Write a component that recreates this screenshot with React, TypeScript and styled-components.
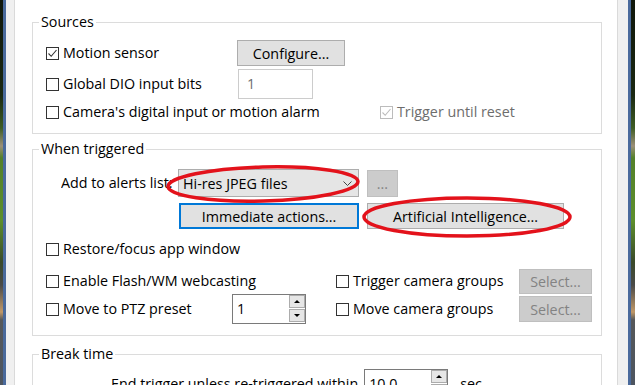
import styled, { createGlobalStyle } from 'styled-components'

const GlobalStyle = createGlobalStyle`
  html, body {
    margin: 0;
    padding: 0;
  }
  body {
    width: 635px;
    height: 385px;
    overflow: hidden;
    background: #fff;
    font-family: "Open Sans", "Noto Sans", sans-serif;
    font-size: 14.3px;
    color: #000;
  }
`

const Screen = styled.div`
  display: flex;
  width: 635px;
  height: 385px;
  overflow: hidden;
`

// desktop photo showing behind the dialog
const Photo = styled.div<{ $w: number }>`
  width: ${p => p.$w}px;
  flex: none;
  background: linear-gradient(
    #10170b 0, #1a2812 95px, #3e5c24 128px, #9b8f78 146px, #54802a 158px,
    #5d8f2c 220px, #3a4a2a 262px, #4a4a48 285px, #c09868 312px, #56585a 320px, #4d5560 385px
  );
`

const FrameEdge = styled.div<{ $side: 'left' | 'right' }>`
  flex: none;
  box-sizing: border-box;
  background: #f0f0f0;
  border-${p => p.$side}: 3px solid #4a6a9c;
  border-${p => (p.$side === 'left' ? 'right' : 'left')}: 1px solid #dadada;
  width: ${p => (p.$side === 'right' ? 14 : 12)}px;
`

const Content = styled.main`
  flex: 1;
  min-width: 0;
  background: #fff;
  padding: 12px 15px 0 17px;
  display: flex;
  flex-direction: column;
`

const GroupBox = styled.fieldset<{ $mt?: number }>`
  margin: ${p => p.$mt ?? 0}px 0 0;
  padding: 0;
  border: 1px solid #dcdcdc;
  min-width: 0;
`

const GroupTitle = styled.legend`
  margin-left: 6px;
  padding: 0 2px;
  line-height: 20px;
`

const GroupBody = styled.div<{ $pt: number; $pb: number }>`
  display: flex;
  flex-direction: column;
  padding: ${p => p.$pt}px 0 ${p => p.$pb}px 13px;
`

const Row = styled.div<{ $h: number; $mt?: number; $pl?: number }>`
  display: flex;
  align-items: center;
  height: ${p => p.$h}px;
  margin-top: ${p => p.$mt ?? 0}px;
  padding-left: ${p => p.$pl ?? 0}px;
`

const Cell = styled.div<{ $w: number }>`
  width: ${p => p.$w}px;
  flex: none;
  display: flex;
  align-items: center;
`

const CheckLabel = styled.label<{ $disabled?: boolean }>`
  display: flex;
  align-items: center;
  gap: 4px;
  white-space: nowrap;
  line-height: 20px;
  color: ${p => (p.$disabled ? '#6d6d6d' : '#000')};
`

const Box = styled.span<{ $disabled?: boolean }>`
  width: 13px;
  height: 13px;
  flex: none;
  box-sizing: border-box;
  border: 1px solid ${p => (p.$disabled ? '#bcbcbc' : '#333')};
  background: #fff;
  display: flex;
  align-items: center;
  justify-content: center;
`

const Label = styled.span<{ $w?: number }>`
  white-space: nowrap;
  line-height: 20px;
  ${p => (p.$w ? `width: ${p.$w}px; flex: none; overflow: hidden;` : '')}
`

const Button = styled.button<{ $w: number; $h: number; $focus?: boolean }>`
  width: ${p => p.$w}px;
  height: ${p => p.$h}px;
  flex: none;
  box-sizing: border-box;
  margin: 0;
  padding: 0;
  font: inherit;
  color: #000;
  background: #e1e1e1;
  border: ${p => (p.$focus ? '2px solid #0078d7' : '1px solid #adadad')};
  position: relative;

  &:disabled {
    background: #cccccc;
    border-color: #bfbfbf;
    color: #838383;
  }
`

const TextBox = styled.div<{ $w: number }>`
  width: ${p => p.$w}px;
  height: 30px;
  flex: none;
  box-sizing: border-box;
  border: 1px solid #cccccc;
  background: #fff;
  color: #6d6d6d;
  padding-left: 8px;
  line-height: 28px;
`

const Combo = styled.div`
  position: relative;
  width: 181px;
  height: 28px;
  flex: none;
  box-sizing: border-box;
  background: #e5e5e5;
  border: 1px solid #adadad;
  display: flex;
  align-items: center;
  padding: 0 6px 0 4px;
  gap: 4px;
`

const ComboText = styled.span`
  flex: 1;
  white-space: nowrap;
`

const Spin = styled.div<{ $w: number }>`
  width: ${p => p.$w}px;
  height: 30px;
  flex: none;
  box-sizing: border-box;
  border: 1px solid #7a7a7a;
  background: #fff;
  display: flex;
`

const SpinValue = styled.span`
  flex: 1;
  padding-left: 4px;
  line-height: 28px;
`

const SpinButtons = styled.div`
  width: 16px;
  display: flex;
  flex-direction: column;
  gap: 1px;
  padding: 0 0 1px;
`

const SpinArrow = styled.span<{ $down?: boolean }>`
  flex: 1;
  box-sizing: border-box;
  background: #e6e6e6;
  border: 1px solid #acacac;
  display: flex;
  align-items: center;
  justify-content: center;

  &::after {
    content: '';
    border-left: 3px solid transparent;
    border-right: 3px solid transparent;
    ${p => (p.$down ? 'border-top: 3px solid #000;' : 'border-bottom: 3px solid #000;')}
  }
`

const Marker = styled.svg`
  position: absolute;
  pointer-events: none;
  overflow: visible;
`

const Unit = styled.span`
  margin-left: 12px;
  line-height: 20px;
`

const CheckMark = ({ disabled }: { disabled?: boolean }) => (
  <svg width="11" height="11" viewBox="0 0 11 11">
    <polyline points="1.5,5.5 4.2,8.3 9.5,2" fill="none" stroke={disabled ? '#bcbcbc' : '#333'} strokeWidth="1.1" />
  </svg>
)

const Checkbox = ({ label, checked, disabled }: { label: string; checked?: boolean; disabled?: boolean }) => (
  <CheckLabel $disabled={disabled}>
    <Box $disabled={disabled}>{checked && <CheckMark disabled={disabled} />}</Box>
    {label}
  </CheckLabel>
)

const SpinBox = ({ value, width }: { value: string; width: number }) => (
  <Spin $w={width}>
    <SpinValue>{value}</SpinValue>
    <SpinButtons>
      <SpinArrow />
      <SpinArrow $down />
    </SpinButtons>
  </Spin>
)

const RED = '#e3121b'

export default function App() {
  return (
    <>
      <GlobalStyle />
      <Screen>
        <Photo $w={3} />
        <FrameEdge $side="left" />
        <Content>
          {/* Sources */}
          <GroupBox>
            <GroupTitle>Sources</GroupTitle>
            <GroupBody $pt={8} $pb={10}>
              <Row $h={26}>
                <Cell $w={191}><Checkbox label="Motion sensor" checked /></Cell>
                <Button $w={108} $h={26}>Configure...</Button>
              </Row>
              <Row $h={30} $mt={3}>
                <Cell $w={192}><Checkbox label="Global DIO input bits" /></Cell>
                <TextBox $w={75}>1</TextBox>
              </Row>
              <Row $h={22} $mt={2}>
                <Cell $w={334}><Checkbox label="Camera's digital input or motion alarm" /></Cell>
                <Checkbox label="Trigger until reset" checked disabled />
              </Row>
            </GroupBody>
          </GroupBox>

          {/* When triggered */}
          <GroupBox $mt={5}>
            <GroupTitle>When triggered</GroupTitle>
            <GroupBody $pt={10} $pb={11}>
              <Row $h={28} $pl={15}>
                <Label $w={117}>Add to alerts list:</Label>
                <Combo>
                  <ComboText>Hi-res JPEG files</ComboText>
                  <svg width="9" height="5" viewBox="0 0 9 5">
                    <polyline points="0.5,0.5 4.5,4.5 8.5,0.5" fill="none" stroke="#444" strokeWidth="1" />
                  </svg>
                  <Marker width="200" height="40" viewBox="0 0 200 40" style={{ left: -16, top: -6 }}>
                    <ellipse cx="100" cy="20" rx="95" ry="17" fill="none" stroke={RED} strokeWidth="3.5" transform="rotate(-1.5 100 20)" />
                  </Marker>
                </Combo>
                <Button $w={31} $h={27} disabled style={{ marginLeft: 8 }}>...</Button>
              </Row>
              <Row $h={26} $mt={6} $pl={133}>
                <Button $w={180} $h={26} $focus>Immediate actions...</Button>
                <Button $w={197} $h={26} style={{ marginLeft: 8 }}>
                  Artificial Intelligence...
                  <Marker width="216" height="44" viewBox="0 0 216 44" style={{ left: -9, top: -9 }}>
                    <ellipse cx="108" cy="22" rx="103" ry="19" fill="none" stroke={RED} strokeWidth="3.5" />
                  </Marker>
                </Button>
              </Row>
              <Row $h={22} $mt={9}>
                <Checkbox label="Restore/focus app window" />
              </Row>
              <Row $h={26} $mt={8}>
                <Cell $w={290}><Checkbox label="Enable Flash/WM webcasting" /></Cell>
                <Cell $w={183}><Checkbox label="Trigger camera groups" /></Cell>
                <Button $w={73} $h={25} disabled>Select...</Button>
              </Row>
              <Row $h={30}>
                <Cell $w={186}><Checkbox label="Move to PTZ preset" /></Cell>
                <SpinBox value="1" width={74} />
                <Cell $w={30} />
                <Cell $w={183}><Checkbox label="Move camera groups" /></Cell>
                <Button $w={73} $h={26} disabled>Select...</Button>
              </Row>
            </GroupBody>
          </GroupBox>

          {/* Break time */}
          <GroupBox $mt={8}>
            <GroupTitle>Break time</GroupTitle>
            <GroupBody $pt={5} $pb={10}>
              <Row $h={30} $pl={65}>
                <Label>End trigger unless re-triggered within</Label>
                <Cell $w={6} />
                <SpinBox value="10.0" width={84} />
                <Unit>sec</Unit>
              </Row>
            </GroupBody>
          </GroupBox>
        </Content>
        <FrameEdge $side="right" />
        <Photo $w={4} />
      </Screen>
    </>
  )
}
